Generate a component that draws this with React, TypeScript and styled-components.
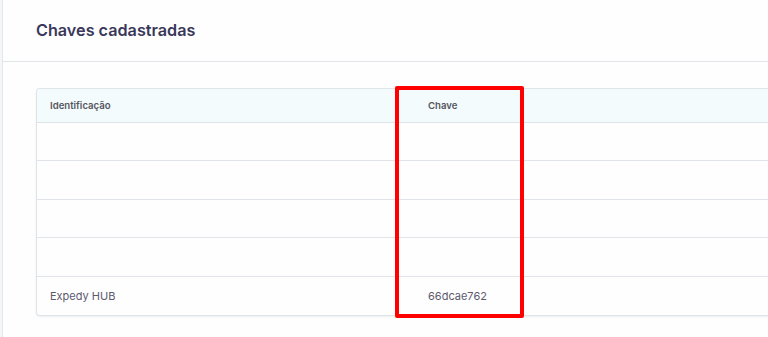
import React from 'react'
import styled, { createGlobalStyle } from 'styled-components'

const GlobalStyle = createGlobalStyle`
    html, body {
        margin: 0;
        padding: 0;
        background: #f4f6f8;
        font-family: Inter, "Noto Sans", sans-serif;
        overflow: hidden;
    }
`

interface IKey {
    name: string
    key: string
}

const keys: IKey[] = [
    { name: '', key: '' },
    { name: '', key: '' },
    { name: '', key: '' },
    { name: '', key: '' },
    { name: 'Expedy HUB', key: '66dcae762' },
]

function App() {
    return (
        <>
            <GlobalStyle />
            <Card>
                <CardHeader>
                    <Title>Chaves cadastradas</Title>
                </CardHeader>
                <CardBody>
                    <TableWrapper>
                        <Table>
                            <thead>
                                <tr>
                                    <Th $width={378}>Identificação</Th>
                                    <Th>Chave</Th>
                                </tr>
                            </thead>
                            <tbody>
                                {keys.map((k, i) => (
                                    <Row key={i}>
                                        <Td>{k.name}</Td>
                                        <Td>{k.key}</Td>
                                    </Row>
                                ))}
                            </tbody>
                        </Table>
                        <Highlight />
                    </TableWrapper>
                </CardBody>
            </Card>
        </>
    )
}

export default App

const Card = styled.div`
    margin-left: 2px;
    height: 337px;
    background-color: #fefefe;
    border-left: 1px solid #e3e7eb;
    overflow: hidden;
`
const CardHeader = styled.div`
    height: 61px;
    display: flex;
    align-items: center;
    padding-left: 33px;
    border-bottom: 1px solid #e1e4e8;
`
const Title = styled.h2`
    margin: 0 0 1px 0;
    font-size: 16.2px;
    font-weight: 600;
    color: #3a385a;
`
const CardBody = styled.div`
    padding: 26px 0 0 33px;
`
const TableWrapper = styled.div`
    position: relative;
    width: 800px;
`
const Table = styled.table`
    width: 100%;
    border-collapse: separate;
    border-spacing: 0;
    border: 1px solid #dfe4e8;
    border-right: none;
    border-radius: 4px 0 0 4px;
    box-shadow: 0 1px 2px rgba(30, 40, 60, 0.08);
    overflow: hidden;
`
const Th = styled.th<{ $width?: number }>`
    width: ${(p) => (p.$width ? `${p.$width}px` : 'auto')};
    height: 34px;
    padding: 0 13px;
    box-sizing: border-box;
    text-align: left;
    background-color: #f3fbfd;
    border-bottom: 1px solid #dfe4e8;
    font-size: 9.6px;
    font-weight: 600;
    color: #56565f;
`
const Row = styled.tr`
    &:last-child td {
        border-bottom: none;
    }
`
const Td = styled.td`
    height: 38.4px;
    padding: 0 13px;
    box-sizing: border-box;
    border-bottom: 1px solid #e1e5e9;
    font-size: 11px;
    color: #5d5a6e;
`
const Highlight = styled.div`
    position: absolute;
    left: 359px;
    top: -2px;
    width: 129px;
    height: 232px;
    box-sizing: border-box;
    border: 4px solid #ff0000;
    border-radius: 2px;
    pointer-events: none;
`
